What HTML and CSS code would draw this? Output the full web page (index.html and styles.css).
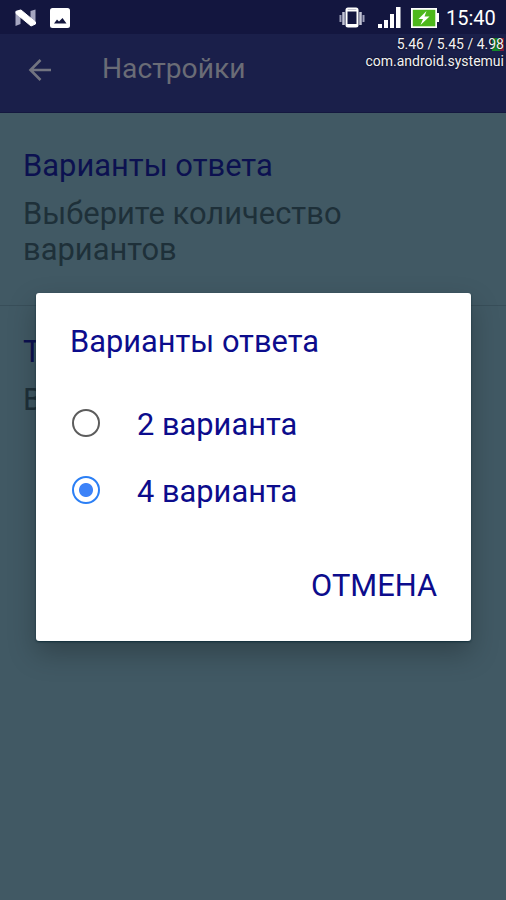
FILE: index.html
```html
<!DOCTYPE html>
<html lang="ru">
<head>
    <meta charset="UTF-8">
    <meta name="viewport" content="width=device-width, initial-scale=1.0">
    <title>Настройки</title>
    <link rel="stylesheet" href="styles.css">
</head>
<body>

    <!-- Status bar -->
    <div class="status-bar">
        <div class="status-left">
            <svg class="icon-n" width="22" height="18" viewBox="0 0 22 18">
                <path d="M0.500 2l5-1.500V15l-5 2zM15.500 2l5-1.500V14l-5 2z" fill="#a5a6c0"/>
                <path d="M1 2.500L6 1l14.500 12v2l-4.500 2L1 4.500z" fill="#fff" stroke="#fff" stroke-linejoin="round"/>
            </svg>
            <svg class="icon-image" width="20" height="20" viewBox="0 0 20 20">
                <rect width="20" height="20" rx="2.500" fill="#fff"/>
                <path d="M4 15.500l3-4 2 2 3.500-3.500 4 5.500z" fill="#14173f"/>
            </svg>
        </div>
        <div class="status-right">
            <svg class="icon-vibrate" width="26" height="22" viewBox="0 0 26 22">
                <path d="M1.500 8v7M24.500 8v7" stroke="#9c9db8" stroke-width="2"/>
                <path d="M4.500 5v13M21.500 5v13" stroke="#c4c5d6" stroke-width="2.500"/>
                <rect x="7.500" y="1.500" width="11" height="18" rx="1.500" fill="none" stroke="#fff" stroke-width="2"/>
                <path d="M8 3.500h10M8 18h10" stroke="#fff" stroke-width="2"/>
            </svg>
            <svg class="icon-signal" width="24" height="22" viewBox="0 0 24 22">
                <path d="M0 17h4v4H0zM6 13h4v8H6zM12 7h4v14h-4zM18 0h4.500v21H18z" fill="#fff"/>
            </svg>
            <svg class="icon-battery" width="29" height="20" viewBox="0 0 29 20">
                <path d="M0 0h26v5h2v9h-2v6H0z" fill="#fff"/>
                <rect x="1.800" y="1.800" width="22.500" height="16.500" fill="#4db81c"/>
                <path d="M15.500 3L7.500 11h4.500L9.500 17l9-8.500h-5z" fill="#fff"/>
            </svg>
            <span class="clock">15:40</span>
        </div>
    </div>

    <!-- Toolbar -->
    <header>
        <svg class="icon-back" width="24" height="24" viewBox="0 0 24 24">
            <path d="M12.500 2L2.500 12l10 10M2.500 12H23" fill="none" stroke="#727480" stroke-width="2.600"/>
        </svg>
        <h1>Настройки</h1>
    </header>

    <!-- CPU overlay -->
    <div class="cpu-overlay">
        <div>5.46 / 5.45 / 4.<span class="cpu-last">98</span></div>
        <div>com.android.systemui</div>
    </div>

    <!-- Settings list -->
    <section class="settings">
        <div class="setting">
            <h2>Варианты ответа</h2>
            <p>Выберите количество вариантов</p>
        </div>
        <div class="setting">
            <h2>Т</h2>
            <p>В</p>
        </div>
    </section>

    <!-- Dialog -->
    <div class="dialog">
        <h2>Варианты ответа</h2>
        <div class="option">
            <span class="radio"></span>
            <span>2 варианта</span>
        </div>
        <div class="option">
            <span class="radio checked"></span>
            <span>4 варианта</span>
        </div>
        <div class="actions">
            <button type="button">ОТМЕНА</button>
        </div>
    </div>

</body>
</html>
```
FILE: styles.css
```css
* {
    box-sizing: border-box;
}
body {
    position: relative;
    height: 900px;
    margin: 0;
    overflow: hidden;
    background-color: #415964;
    font-family: Roboto, sans-serif;
}
h1, h2, p {
    margin: 0;
    font-weight: 400;
}
.status-bar {
    display: flex;
    justify-content: space-between;
    height: 34px;
    padding: 7px 11px 0 15px;
    background-color: #13163f;
}
.status-left, .status-right {
    display: flex;
    align-items: flex-start;
}
.icon-n {
    margin-top: 2px;
}
.icon-image {
    margin: 1px 0 0 13px;
}
.icon-signal {
    margin-left: 13px;
}
.icon-battery {
    margin: 1px 0 0 9px;
}
.clock {
    width: 49px;
    margin-left: 6px;
    color: #fff;
    font-size: 20px;
    line-height: 23px;
    white-space: nowrap;
}
header {
    display: flex;
    height: 79px;
    padding: 24px 28px 0;
    background-color: #1a1f4a;
    border-bottom: 1px solid #14183f;
}
header h1 {
    margin: -7px 0 0 50px;
    color: #6a6c76;
    font-size: 28.200px;
    line-height: 35px;
}
.cpu-overlay {
    position: absolute;
    top: 36px;
    right: 2px;
    color: #f2f2f6;
    font-size: 14px;
    line-height: 16.500px;
    text-align: right;
    text-shadow: 0 0 2px #000;
}
.cpu-overlay div:first-child {
    font-size: 14px;
}
.cpu-last {
    background: linear-gradient(90deg, transparent 25%, #138a2c 25%, #138a2c 78%, #8c1c3c 78%) center / 100% 13px no-repeat;
}
.setting {
    height: 193px;
    padding: 34px 120px 0 23px;
    border-bottom: 1px solid #384e59;
}
.setting:last-child {
    height: 594px;
    padding-top: 27px;
    border-bottom: 0;
}
.setting h2 {
    color: #0c1150;
    font-size: 30.900px;
    line-height: 38px;
}
.setting p {
    margin-top: 11px;
    color: #1e3039;
    font-size: 30.900px;
    line-height: 36px;
}
.dialog {
    position: absolute;
    top: 293px;
    left: 36px;
    width: 435px;
    height: 348px;
    padding: 30px 34px 0;
    background-color: #fff;
    border-radius: 3px;
    box-shadow: 0 1px 2px #102e3a, 0 12px 28px rgba(0, 0, 0, 0.25);
    color: #0c0c8c;
    font-size: 30.800px;
}
.dialog h2 {
    margin-bottom: 30px;
    font-size: 30.800px;
    line-height: 38px;
}
.option {
    display: flex;
    align-items: center;
    height: 67px;
}
.radio {
    width: 28px;
    height: 28px;
    margin: 0 37px 4px 2px;
    border: 2px solid #5c5c5c;
    border-radius: 50%;
}
.radio.checked {
    border: 2.500px solid #2b7ff5;
    background: radial-gradient(circle, #3c82f8 6.500px, #fff 7.500px);
}
.actions {
    display: flex;
    justify-content: flex-end;
    margin-top: 42px;
}
.actions button {
    padding: 0;
    border: 0;
    background: none;
    color: #0c0c8c;
    font-family: inherit;
    font-size: 30.800px;
    line-height: 38px;
}
```
